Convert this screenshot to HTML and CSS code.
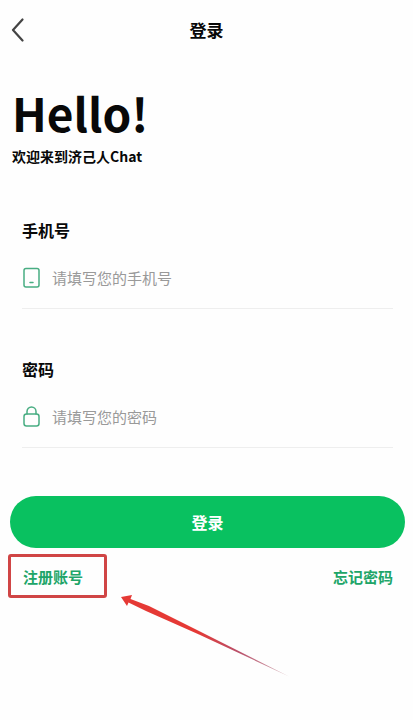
FILE: index.html
```html
<!DOCTYPE html>
<html lang="zh-CN">
<head>
<meta charset="utf-8">
<meta name="viewport" content="width=device-width, initial-scale=1">
<title>登录</title>
<link rel="stylesheet" href="styles.css">
</head>
<body>
<header class="topbar">
  <button class="back" type="button" aria-label="返回">
    <svg width="14" height="24" viewBox="0 0 14 24" fill="none" stroke="#444" stroke-width="2.200" stroke-linecap="round" stroke-linejoin="round"><path d="M11.500 1.500 2 12l9.500 10.500"/></svg>
  </button>
  <h1 class="title">登录</h1>
</header>
<main>
  <section class="welcome">
    <h2 class="hello">Hello!</h2>
    <p class="subtitle">欢迎来到济己人Chat</p>
  </section>
  <form class="form">
    <div class="field">
      <label class="label" for="phone">手机号</label>
      <div class="control">
        <svg class="icon" width="18" height="22" viewBox="0 0 18 22" fill="none" stroke="#48ad82" stroke-width="1.5" stroke-linecap="round"><rect x="2" y="2.500" width="15" height="18.500" rx="2"/><path d="M8 16.500h3"/></svg>
        <input class="input" id="phone" type="tel" placeholder="请填写您的手机号">
      </div>
    </div>
    <div class="field">
      <label class="label" for="password">密码</label>
      <div class="control">
        <svg class="icon" width="18" height="22" viewBox="0 0 18 22" fill="none" stroke="#48ad82" stroke-width="1.5" stroke-linecap="round"><rect x="2" y="9" width="15" height="12" rx="2.500"/><path d="M5 9V6.500a4.500 4.500 0 0 1 9 0V9"/></svg>
        <input class="input" id="password" type="password" placeholder="请填写您的密码">
      </div>
    </div>
    <button class="submit" type="submit">登录</button>
  </form>
  <nav class="links">
    <a class="link register" href="#register">注册账号</a>
    <svg class="arrow" width="170" height="84" viewBox="0 0 170 84" aria-hidden="true"><defs><linearGradient id="tail" x1="0" y1="0" x2="1" y2="0"><stop offset="0.45" stop-color="#e53935"/><stop offset="0.7" stop-color="#b9506a"/><stop offset="1" stop-color="#d5b5bb"/></linearGradient></defs><path fill="url(#tail)" d="M0 2 L11 0 L9.5 4 L28 11 L80 37 L168 81.5 L78 39.5 L25 16 L7.5 7.5 L6 11 Z"/></svg>
    <a class="link" href="#forgot">忘记密码</a>
  </nav>
</main>
</body>
</html>
```
FILE: styles.css
```css
* {
  box-sizing: border-box;
}

body {
  min-height: 100vh;
  margin: 0;
  background: #fefefe;
  color: #080808;
  font-family: "Noto Sans CJK SC", sans-serif;
}

h1, h2, p {
  margin: 0;
}

button, input {
  border: 0;
  padding: 0;
  background: none;
  font-family: inherit;
}

.topbar {
  display: grid;
  grid-template-columns: 40px 1fr 40px;
  align-items: center;
  height: 60px;
}

.back {
  display: flex;
  padding-left: 11px;
}

.title {
  font-size: 17px;
  line-height: 24px;
  text-align: center;
}

.welcome {
  padding: 20px 12px 0;
}

.hello {
  font-size: 46px;
  line-height: 64px;
}

.subtitle {
  font-size: 14px;
  font-weight: 700;
  line-height: 24px;
}

.form {
  padding: 50px 8px 0 10px;
}

.field {
  margin: 0 12px 48px;
  border-bottom: 1px solid #eee;
}

.label {
  display: block;
  font-size: 16px;
  font-weight: 700;
  line-height: 24px;
}

.control {
  display: flex;
  align-items: center;
  gap: 12px;
  padding: 20px 0 16px;
}

.icon {
  flex: none;
}

.input {
  flex: 1;
  min-width: 0;
  height: 30px;
  font-size: 15px;
  outline: 0;
}

.input::placeholder {
  color: #999;
  opacity: 1;
}

.submit {
  display: block;
  width: 100%;
  height: 52px;
  border-radius: 26px;
  background: #09c160;
  color: #fff;
  font-size: 16px;
  font-weight: 700;
}

.links {
  position: relative;
  display: flex;
  justify-content: space-between;
  padding: 6px 20px 0 8px;
}

.link {
  padding: 10px 0 8px;
  border: 3px solid transparent;
  border-width: 3px 0;
  color: #20a568;
  font-size: 15px;
  font-weight: 700;
  line-height: 20px;
  text-decoration: none;
}

.register {
  padding: 10px 21px 8px 12px;
  border: 3px solid #d04545;
  border-radius: 3px;
}

.arrow {
  position: absolute;
  top: 47px;
  left: 121px;
}
```
